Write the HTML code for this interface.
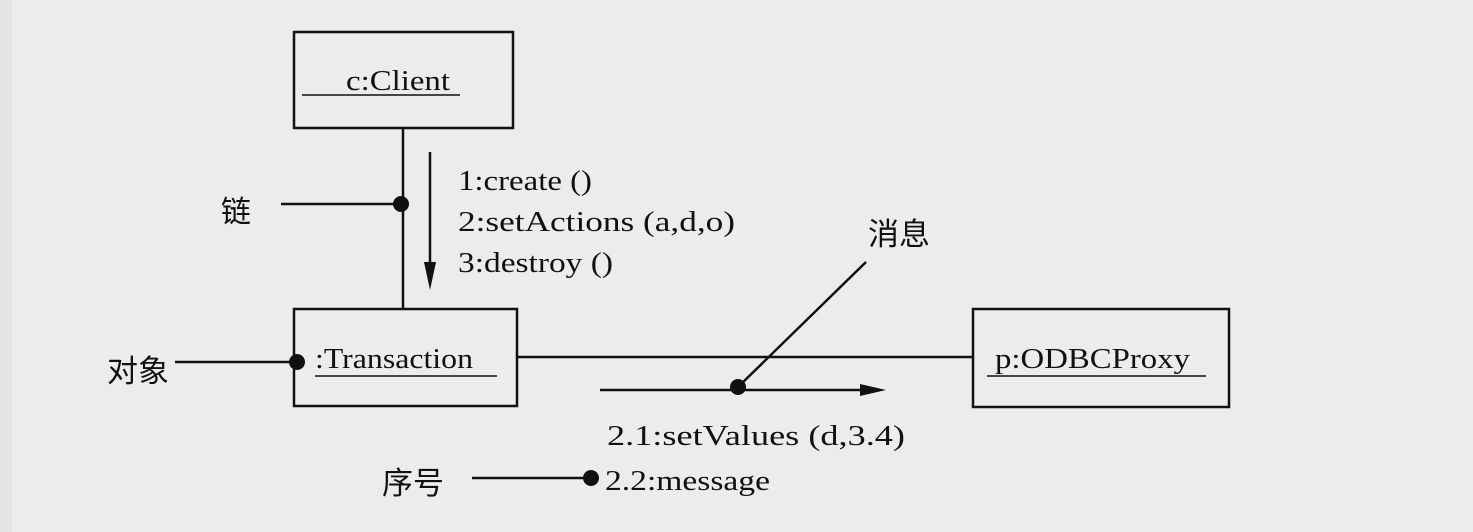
<!DOCTYPE html>
<html><head><style>
html,body{margin:0;padding:0;background:#ecebed;}
svg{display:block}
text{font-family:"Liberation Serif",serif;fill:#111;}
.cn{font-family:"Liberation Sans","Noto Sans CJK SC",sans-serif;}
</style></head><body>
<svg width="1473" height="532" viewBox="0 0 1473 532">
<rect x="0" y="0" width="12" height="532" fill="#e4e3e5"/>
<g stroke="#111" stroke-width="2.5" fill="none">
<rect x="294" y="32" width="219" height="96"/>
<rect x="294" y="309" width="223" height="97"/>
<rect x="973" y="309" width="256" height="98"/>
<line x1="403" y1="128" x2="403" y2="309"/>
<line x1="281" y1="204" x2="401" y2="204"/>
<line x1="430" y1="152" x2="430" y2="280"/>
<line x1="175" y1="362" x2="297" y2="362"/>
<line x1="517" y1="357" x2="973" y2="357"/>
<line x1="600" y1="390" x2="870" y2="390"/>
<line x1="738" y1="387" x2="866" y2="262"/>
<line x1="472" y1="478" x2="590" y2="478"/>
<line x1="302" y1="95" x2="460" y2="95" stroke-width="1.5"/>
<line x1="315" y1="376" x2="497" y2="376" stroke-width="1.5"/>
<line x1="987" y1="376" x2="1206" y2="376" stroke-width="1.5"/>
</g>
<g fill="#111">
<polygon points="424,262 436,262 430,290"/>
<polygon points="860,384 886,390 860,396"/>
<circle cx="401" cy="204" r="8"/>
<circle cx="297" cy="362" r="8"/>
<circle cx="738" cy="387" r="8"/>
<circle cx="591" cy="478" r="8"/>
</g>
<text x="346" y="90" font-size="29" textLength="104" lengthAdjust="spacingAndGlyphs">c:Client</text>
<text x="315" y="368" font-size="29" textLength="158" lengthAdjust="spacingAndGlyphs">:Transaction</text>
<text x="995" y="368" font-size="29" textLength="195" lengthAdjust="spacingAndGlyphs">p:ODBCProxy</text>
<text x="458" y="190" font-size="28" textLength="134" lengthAdjust="spacingAndGlyphs">1:create ()</text>
<text x="458" y="231" font-size="28" textLength="277" lengthAdjust="spacingAndGlyphs">2:setActions (a,d,o)</text>
<text x="458" y="272" font-size="28" textLength="155" lengthAdjust="spacingAndGlyphs">3:destroy ()</text>
<text x="607" y="445" font-size="28" textLength="298" lengthAdjust="spacingAndGlyphs">2.1:setValues (d,3.4)</text>
<text x="605" y="490" font-size="28" textLength="165" lengthAdjust="spacingAndGlyphs">2.2:message</text>
<text class="cn" x="221" y="222" font-size="30">链</text>
<text class="cn" x="107" y="382" font-size="31">对象</text>
<text class="cn" x="868" y="245" font-size="31">消息</text>
<text class="cn" x="382" y="494" font-size="31">序号</text>
</svg>
</body></html>
